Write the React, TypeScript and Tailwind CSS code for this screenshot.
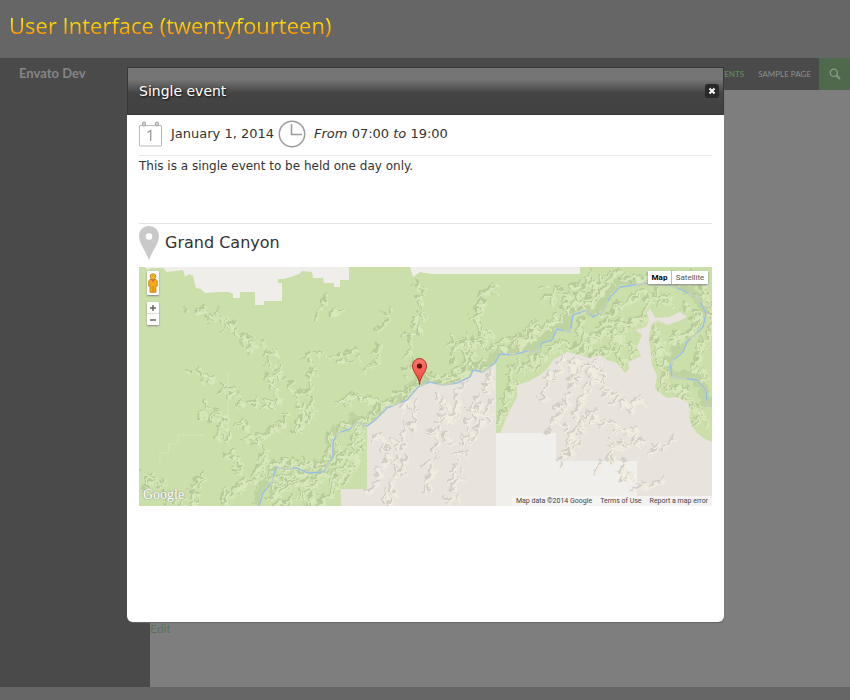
import React from "react";

type Pt = [number, number];
interface Ridge {
  pts: Pt[];
  spur: number;
  step: number;
}

const RIVER: Pt[] = [
  [120, 239], [124, 226], [133, 215], [137, 200], [144, 202], [158, 201], [169, 206], [184, 205], [194, 190],
  [194, 175], [199, 166], [211, 162], [218, 155], [228, 159], [236, 153], [248, 141], [268, 133], [279, 120],
  [291, 115], [303, 118], [318, 116], [331, 110], [334, 103], [344, 105], [356, 96], [361, 87], [374, 88],
  [388, 84], [399, 85], [403, 76], [413, 73], [418, 62], [431, 65], [434, 48], [448, 43], [454, 50], [464, 45],
  [471, 30], [481, 20], [511, 16], [528, 17], [539, 21], [559, 31], [567, 46], [564, 60], [548, 75], [544, 85],
  [531, 96], [533, 110], [558, 113], [567, 123], [568, 139], [573, 139],
];

const FOREST: Pt[] = [
  [0, 0], [573, 0], [573, 175], [566, 172], [558, 166], [553, 159], [550, 150], [551, 142], [549, 136], [539, 130],
  [528, 131], [521, 126], [516, 121], [518, 108], [513, 98], [512, 88], [510, 72], [512, 58], [519, 53], [528, 58],
  [540, 54], [548, 50], [541, 45], [530, 50], [516, 51], [511, 41], [508, 46], [510, 53], [507, 60], [496, 63],
  [503, 68], [498, 80], [502, 89], [489, 95], [490, 102], [486, 106], [478, 96], [468, 93], [461, 88], [451, 91],
  [440, 88], [428, 85], [414, 93], [408, 102], [401, 108], [388, 115], [378, 118], [378, 130], [370, 145],
  [361, 166], [357, 166], [357, 96], [344, 105], [334, 103], [331, 110], [318, 116], [303, 118], [291, 115],
  [279, 120], [268, 133], [248, 141], [236, 153], [228, 159], [228, 222], [202, 222], [202, 239], [0, 239],
];

const PLAINS: Pt[][] = [
  [
    [6, 0], [8, 3], [12, 1], [24, 1], [28, 5], [44, 3], [46, 10], [50, 7], [54, 9], [57, 21], [62, 22], [66, 26],
    [80, 25], [90, 25], [94, 27], [94, 31], [101, 31], [101, 25], [116, 25], [116, 38], [125, 38], [125, 34],
    [143, 34], [143, 16], [139, 16], [139, 12], [144, 12], [152, 10], [160, 7], [163, 4], [173, 5], [174, 11],
    [184, 11], [185, 16], [195, 16], [195, 20], [201, 20], [201, 13], [210, 13], [210, 0],
  ],
  [[271, 0], [274, 10], [281, 5], [293, 7], [441, 7], [441, 0]],
  [[357, 166], [417, 166], [417, 194], [498, 194], [498, 239], [357, 239]],
];

const FOREST_RIDGES: Ridge[] = [
  { pts: [[52, 38], [75, 48], [95, 63], [112, 76], [130, 86]], spur: 9, step: 5 },
  { pts: [[130, 86], [129, 105], [134, 122], [136, 134], [118, 135]], spur: 7, step: 6 },
  { pts: [[140, 96], [150, 120], [161, 140], [158, 165]], spur: 7, step: 6 },
  { pts: [[170, 85], [171, 115], [168, 143], [155, 168]], spur: 9, step: 6 },
  { pts: [[55, 100], [75, 115], [90, 124], [100, 136]], spur: 7, step: 5 },
  { pts: [[60, 140], [78, 150], [88, 170], [97, 190], [100, 220]], spur: 9, step: 5 },
  { pts: [[104, 152], [118, 168], [124, 186], [136, 200]], spur: 9, step: 5 },
  { pts: [[150, 146], [138, 158], [120, 168]], spur: 7, step: 6 },
  { pts: [[0, 205], [15, 215], [30, 224], [42, 238]], spur: 8, step: 5 },
  { pts: [[60, 210], [55, 228], [50, 239]], spur: 8, step: 5 },
  { pts: [[80, 239], [88, 225], [110, 214], [122, 195]], spur: 10, step: 5 },
  { pts: [[180, 45], [187, 38], [200, 47]], spur: 7, step: 5 },
  { pts: [[238, 75], [234, 95], [224, 108]], spur: 7, step: 6 },
  { pts: [[250, 42], [246, 54], [238, 62]], spur: 6, step: 6 },
  { pts: [[196, 132], [210, 133], [225, 128], [237, 131]], spur: 6, step: 5 },
  { pts: [[183, 86], [200, 90], [222, 88]], spur: 6, step: 9 },
  { pts: [[276, 12], [281, 30], [277, 60], [271, 84], [267, 108]], spur: 7, step: 6 },
  { pts: [[134, 196], [150, 193], [164, 198], [180, 202], [190, 185], [187, 170]], spur: 9, step: 4 },
  { pts: [[134, 214], [150, 212], [170, 216], [186, 212]], spur: 14, step: 4 },
  { pts: [[128, 232], [150, 230], [172, 232], [190, 226]], spur: 13, step: 4 },
  { pts: [[200, 210], [209, 200], [219, 178], [222, 165]], spur: 12, step: 4 },
  { pts: [[192, 216], [202, 190], [206, 172]], spur: 12, step: 4 },
  { pts: [[205, 156], [225, 150], [246, 136], [266, 126], [277, 112]], spur: 8, step: 4 },
  { pts: [[285, 106], [305, 111], [326, 103], [345, 97]], spur: 10, step: 4 },
  { pts: [[312, 90], [314, 73], [330, 75], [342, 72]], spur: 8, step: 5 },
  { pts: [[355, 15], [340, 32], [336, 52], [346, 66], [354, 84]], spur: 9, step: 5 },
  { pts: [[325, 100], [331, 85], [329, 75]], spur: 9, step: 5 },
  { pts: [[358, 80], [375, 74], [390, 70], [398, 60]], spur: 9, step: 4 },
  { pts: [[385, 75], [394, 58], [415, 53], [430, 40]], spur: 8, step: 4 },
  { pts: [[402, 24], [420, 27], [440, 23], [448, 14], [462, 12]], spur: 9, step: 4 },
  { pts: [[425, 40], [447, 35], [460, 26], [468, 12], [485, 5]], spur: 9, step: 4 },
  { pts: [[490, 11], [510, 8], [530, 6], [545, 12], [560, 8]], spur: 8, step: 4 },
  { pts: [[372, 96], [388, 93], [404, 86], [420, 76]], spur: 10, step: 4 },
  { pts: [[364, 152], [367, 132], [375, 112], [370, 97]], spur: 8, step: 4 },
  { pts: [[425, 76], [447, 77], [470, 81], [482, 94]], spur: 11, step: 4 },
  { pts: [[440, 60], [457, 66], [474, 66], [492, 78]], spur: 11, step: 4 },
  { pts: [[462, 55], [480, 52], [496, 54], [505, 40]], spur: 10, step: 4 },
  { pts: [[474, 38], [491, 31], [510, 29], [532, 32]], spur: 10, step: 4 },
  { pts: [[515, 60], [519, 80], [524, 99], [524, 120]], spur: 9, step: 4 },
  { pts: [[532, 64], [540, 70], [552, 62], [561, 48], [550, 34]], spur: 9, step: 4 },
  { pts: [[571, 60], [560, 78], [556, 96], [566, 111]], spur: 9, step: 4 },
  { pts: [[530, 120], [546, 124], [557, 137], [562, 158]], spur: 9, step: 4 },
  { pts: [[555, 15], [567, 28], [572, 44]], spur: 8, step: 4 },
];

const DESERT_RIDGES: Ridge[] = [
  { pts: [[274, 134], [270, 158], [264, 178], [259, 205], [246, 235]], spur: 9, step: 6 },
  { pts: [[233, 166], [247, 174], [249, 190], [240, 206], [232, 218]], spur: 6, step: 7 },
  { pts: [[302, 124], [306, 145], [300, 165], [294, 190], [287, 225]], spur: 9, step: 6 },
  { pts: [[324, 118], [318, 135], [312, 155], [307, 178]], spur: 8, step: 6 },
  { pts: [[350, 104], [340, 130], [328, 155], [325, 184], [318, 205], [313, 234]], spur: 9, step: 6 },
  { pts: [[354, 130], [347, 150], [336, 170]], spur: 7, step: 6 },
  { pts: [[424, 90], [412, 108], [402, 130]], spur: 9, step: 5 },
  { pts: [[430, 90], [436, 110], [425, 135], [419, 150], [408, 160]], spur: 9, step: 5 },
  { pts: [[436, 92], [452, 100], [454, 116], [442, 132], [440, 158], [430, 190]], spur: 9, step: 5 },
  { pts: [[455, 95], [466, 108], [470, 125], [490, 135], [506, 134]], spur: 9, step: 5 },
  { pts: [[448, 140], [460, 154], [478, 160], [498, 166]], spur: 9, step: 6 },
  { pts: [[463, 200], [471, 184], [480, 174], [502, 174]], spur: 8, step: 6 },
  { pts: [[480, 190], [486, 204], [496, 218], [520, 214]], spur: 8, step: 6 },
  { pts: [[428, 158], [434, 174], [424, 192]], spur: 7, step: 5 },
  { pts: [[510, 183], [522, 178], [530, 172]], spur: 6, step: 6 },
];

const line = (pts: Pt[]) => "M" + pts.map((p) => p[0].toFixed(1) + " " + p[1].toFixed(1)).join("L");

// Small seeded generator, so that the relief is the same on every render.
function makeRandom(seed: number) {
  let s = seed;
  return () => {
    s = (s * 16807) % 2147483647;
    return s / 2147483647;
  };
}

// Walks along each ridge and drops crest segments and spurs, most of which
// run down to the south-west, as the side canyons do.
function relief(ridges: Ridge[], seed: number) {
  const rnd = makeRandom(seed);
  const out: string[] = [];
  for (const { pts, spur, step } of ridges) {
    for (let i = 0; i < pts.length - 1; i++) {
      const [x0, y0] = pts[i];
      const [x1, y1] = pts[i + 1];
      const len = Math.hypot(x1 - x0, y1 - y0);
      const dir = Math.atan2(y1 - y0, x1 - x0);
      for (let d = 0; d < len; d += step) {
        const x = x0 + ((x1 - x0) * d) / len + (rnd() - 0.5) * spur;
        const y = y0 + ((y1 - y0) * d) / len + (rnd() - 0.5) * spur;
        if (rnd() < 0.7) {
          const n = step + 2;
          const t = dir + rnd() - 0.5;
          out.push(line([[x, y], [x + Math.cos(t) * n, y + Math.sin(t) * n]]));
        }
        const a = rnd() < 0.65 ? 2.2 + (rnd() - 0.5) * 0.8 : rnd() * 6.28;
        const l = spur * (0.4 + rnd() * 0.8);
        const b = a + (rnd() - 0.5) * 1.6;
        const mx = x + (Math.cos(a) * l) / 2;
        const my = y + (Math.sin(a) * l) / 2;
        out.push(line([[x, y], [mx, my], [mx + (Math.cos(b) * l) / 2, my + (Math.sin(b) * l) / 2]]));
      }
    }
  }
  return out.join("");
}

const FOREST_RELIEF = relief(FOREST_RIDGES, 4211);
const DESERT_RELIEF = relief(DESERT_RIDGES, 977);

function TerrainMap() {
  return (
    <svg
      viewBox="0 0 573 239"
      preserveAspectRatio="xMidYMid slice"
      className="block h-[239px] w-full"
      role="img"
      aria-label="Map of Grand Canyon"
    >
      <defs>
        <clipPath id="forest">
          <path d={line(FOREST) + "Z"} />
        </clipPath>
        <filter id="rugged" filterUnits="userSpaceOnUse" x="0" y="0" width="573" height="239">
          <feTurbulence type="fractalNoise" baseFrequency="0.14" numOctaves="2" seed="5" result="noise" />
          <feDisplacementMap in="SourceGraphic" in2="noise" scale="11" xChannelSelector="R" yChannelSelector="G" />
          <feGaussianBlur stdDeviation="0.5" />
        </filter>
        <linearGradient id="pin" x1="0" y1="0" x2="0" y2="1">
          <stop offset="0" stopColor="#ff776b" />
          <stop offset="1" stopColor="#ee4236" />
        </linearGradient>
      </defs>
      <rect width="573" height="239" fill="#e8e4dd" />
      <path d={line(PLAINS[2]) + "Z"} fill="#f0efeb" />
      <g fill="none" strokeLinecap="round" strokeLinejoin="round" filter="url(#rugged)">
        <path d={DESERT_RELIEF} stroke="#d2cec7" strokeWidth="2" />
        <path d={DESERT_RELIEF} stroke="#f2ece0" strokeWidth="2" transform="translate(2 1.6)" />
      </g>
      <path d={line(FOREST) + "Z"} fill="#cbdfab" />
      <g clipPath="url(#forest)">
        <g fill="none" strokeLinecap="round" strokeLinejoin="round" filter="url(#rugged)">
          <path d={line(RIVER)} stroke="#b4c894" strokeWidth="8" transform="translate(-3 -4)" opacity="0.5" />
          <path d={FOREST_RELIEF} stroke="#b5ca97" strokeWidth="2" />
          <path d={FOREST_RELIEF} stroke="#d8e8ba" strokeWidth="1.8" transform="translate(2 1.6)" />
        </g>
      </g>
      <path d="M21 195V186H30V177H39V168H65M89 105V165" fill="none" stroke="#d6e6bb" />
      <path d={line(PLAINS[0]) + "Z" + line(PLAINS[1]) + "Z"} fill="#f0eeea" />
      <path d={line(RIVER)} fill="none" stroke="#c3d0c0" strokeWidth="1.800" strokeLinejoin="round" />
      <path
        d={line(RIVER)}
        fill="none"
        stroke="#8dbaf2"
        strokeWidth="1"
        strokeLinejoin="round"
        strokeDasharray="26 7 12 16 34 10"
      />
      <path
        d="M280.500 117.500C280 109 273.500 105.500 273.500 99A7 7.500 0 0 1 287.500 99C287.500 105.500 281 109 280.500 117.500Z"
        fill="url(#pin)"
        stroke="#a9352d"
      />
      <circle cx="280.500" cy="99" r="2.600" fill="#5d1210" />
    </svg>
  );
}

function CalendarIcon() {
  return (
    <svg width="24" height="26" viewBox="0 0 24 26" fill="none" stroke="#b9b9b9" aria-hidden="true">
      <rect x="0.500" y="4.500" width="22" height="20.500" rx="0.500" />
      <rect x="3.500" y="1" width="3" height="4" rx="1" fill="#cfcfcf" stroke="#aaa" />
      <rect x="16.500" y="1" width="3" height="4" rx="1" fill="#cfcfcf" stroke="#aaa" />
      <path d="M8.500 11.500L11.700 9.500V20" stroke="#999" strokeWidth="1.300" />
    </svg>
  );
}

function ClockIcon() {
  return (
    <svg width="28" height="28" viewBox="0 0 28 28" fill="none" stroke="#9b9b9b" strokeWidth="1.500" aria-hidden="true">
      <circle cx="14" cy="14" r="12.700" />
      <path d="M13.500 4V14.500H24" />
    </svg>
  );
}

function PlaceIcon() {
  return (
    <svg width="20" height="34" viewBox="0 0 20 34" aria-hidden="true">
      <path
        d="M10 0C4.500 0 0 4.300 0 9.800C0 18 6.500 24 10 34C13.500 24 20 18 20 9.800C20 4.300 15.500 0 10 0ZM10 7.200A3.300 3.300 0 1 1 10 13.800A3.300 3.300 0 1 1 10 7.200Z"
        fill="#c9c9c9"
        fillRule="evenodd"
      />
    </svg>
  );
}

function PegmanIcon() {
  return (
    <svg width="10" height="20" viewBox="0 0 10 20" aria-hidden="true">
      <path
        d="M2 6.500H8L9.300 8V13H8V19.300H2V13H0.700V8Z"
        fill="#f5ab16"
        stroke="#c87a10"
        strokeWidth="0.800"
      />
      <path d="M5 13V19" stroke="#c87a10" strokeWidth="0.800" />
      <path d="M3 6.500L5 9.500L7 6.500Z" fill="#e8604c" />
      <circle cx="5" cy="3.500" r="2.800" fill="#f9bd3b" stroke="#c87a10" strokeWidth="0.800" />
      <path d="M3 3H7" stroke="#c87a10" strokeWidth="0.600" />
    </svg>
  );
}

function EventDialog() {
  return (
    <section
      role="dialog"
      aria-labelledby="event-title"
      className="flex min-h-[555px] flex-col rounded-b-md bg-white font-['DejaVu_Sans',Verdana,sans-serif] text-[#333] shadow-[0_1px_1px_#666]"
    >
      <header className="flex h-12 shrink-0 items-center justify-between border border-[#383838] bg-linear-to-b from-[#757575] from-25% via-[#444] via-55% to-[#414141] pr-1 pl-[11px]">
        <h2 id="event-title" className="text-sm text-white [text-shadow:1px_1px_2px_#111]">
          Single event
        </h2>
        <button
          type="button"
          aria-label="Close"
          className="flex size-[14px] items-center justify-center rounded-[3px] bg-[#292929]"
        >
          <svg width="8" height="8" viewBox="0 0 8 8" aria-hidden="true">
            <path d="M1.500 1.500L6.500 6.500M6.500 1.500L1.500 6.500" stroke="#f2f2f2" strokeWidth="2.200" />
          </svg>
        </button>
      </header>
      <div className="px-3">
        <div className="flex h-[41px] items-center border-b border-[#e9e9e9] pb-[2px] text-[13px]">
          <CalendarIcon />
          <time className="ml-2">January 1, 2014</time>
          <span className="mx-1">
            <ClockIcon />
          </span>
          <p className="ml-1">
            <em>From</em> 07:00 <em>to</em> 19:00
          </p>
        </div>
        <p className="h-[67px] text-xs leading-5">This is a single event to be held one day only.</p>
        <div className="flex h-11 items-center gap-[6px] border-t border-[#e3e3e3] pb-[5px]">
          <PlaceIcon />
          <h3 className="text-base">Grand Canyon</h3>
        </div>
        <div className="relative font-[Roboto,sans-serif]">
          <TerrainMap />
          <div className="absolute top-1 left-2 flex w-3 flex-col gap-[7px] text-[#555]">
            <button
              type="button"
              aria-label="Street View"
              className="flex h-6 items-center justify-center rounded-[1px] bg-white shadow-[0_1px_2px_#888]"
            >
              <PegmanIcon />
            </button>
            <div className="flex flex-col rounded-[1px] bg-white shadow-[0_1px_2px_#888]">
              <button type="button" aria-label="Zoom in" className="flex h-3 items-center justify-center border-b border-[#ddd]">
                <svg width="6" height="6" viewBox="0 0 6 6" stroke="#666" strokeWidth="1.500" aria-hidden="true">
                  <path d="M3 0V6M0 3H6" />
                </svg>
              </button>
              <button type="button" aria-label="Zoom out" className="flex h-[11px] items-center justify-center">
                <svg width="6" height="6" viewBox="0 0 6 6" stroke="#666" strokeWidth="1.500" aria-hidden="true">
                  <path d="M0 3H6" />
                </svg>
              </button>
            </div>
          </div>
          <div className="absolute top-1 right-1 flex h-[13px] bg-white text-[8px] leading-[13px] shadow-[0_1px_2px_#888]">
            <button type="button" className="w-6 border-r border-[#bbb] font-bold text-black">
              Map
            </button>
            <button type="button" className="w-9 text-[#555]">
              Satellite
            </button>
          </div>
          <span className="absolute bottom-1 left-1 font-['Liberation_Serif',serif] text-sm leading-[14px] text-white [text-shadow:0_0_2px_#777]">
            Google
          </span>
          <div className="absolute right-0 bottom-0 flex h-[10px] gap-2 bg-[#f5f5f5]/80 px-1 text-[7px] leading-[10px] text-[#444]">
            <span>Map data ©2014 Google</span>
            <a href="#terms">Terms of Use</a>
            <a href="#report">Report a map error</a>
          </div>
        </div>
      </div>
    </section>
  );
}

export default function App() {
  return (
    <div className="relative flex min-h-screen flex-col bg-[#666] pb-[13px]">
      <h1 className="flex h-[58px] items-center px-[9px] pb-2 font-['Open_Sans',sans-serif] text-[22px]">
        <span className="bg-linear-to-b from-[#ff0] from-20% to-[#ff9000] to-80% bg-clip-text text-transparent">
          User Interface (twentyfourteen)
        </span>
      </h1>
      <div className="flex grow flex-col font-[Lato,sans-serif]">
        <header className="flex h-8 items-center justify-between bg-[#4a4a4a] pl-[19px]">
          <a href="#home" className="text-[13px] font-bold text-[#858585]">
            Envato Dev
          </a>
          <nav className="flex items-center gap-[14px] text-[8px]">
            <a href="#events" className="font-bold text-[#5b8558]">
              EVENTS
            </a>
            <a href="#sample" className="text-[#909090]">
              SAMPLE PAGE
            </a>
            <button
              type="button"
              aria-label="Search"
              className="-ml-[6px] flex h-8 w-[31px] items-center justify-center bg-[#4f694c]"
            >
              <svg width="12" height="12" viewBox="0 0 12 12" fill="none" stroke="#8b988a" aria-hidden="true">
                <circle cx="4.800" cy="4.800" r="3.600" strokeWidth="1.300" />
                <path d="M7.500 7.500L11 11" strokeWidth="1.800" />
              </svg>
            </button>
          </nav>
        </header>
        <div className="flex grow">
          <aside className="w-[150px] bg-[#4a4a4a]" />
          <main className="flex grow flex-col justify-end bg-[#7e7e7e] pb-[50px]">
            <a href="#edit" className="text-xs leading-4 text-[#5a7357]">
              Edit
            </a>
          </main>
        </div>
      </div>
      <div className="absolute inset-x-0 top-[67px] pr-[126px] pl-[127px]">
        <EventDialog />
      </div>
    </div>
  );
}
